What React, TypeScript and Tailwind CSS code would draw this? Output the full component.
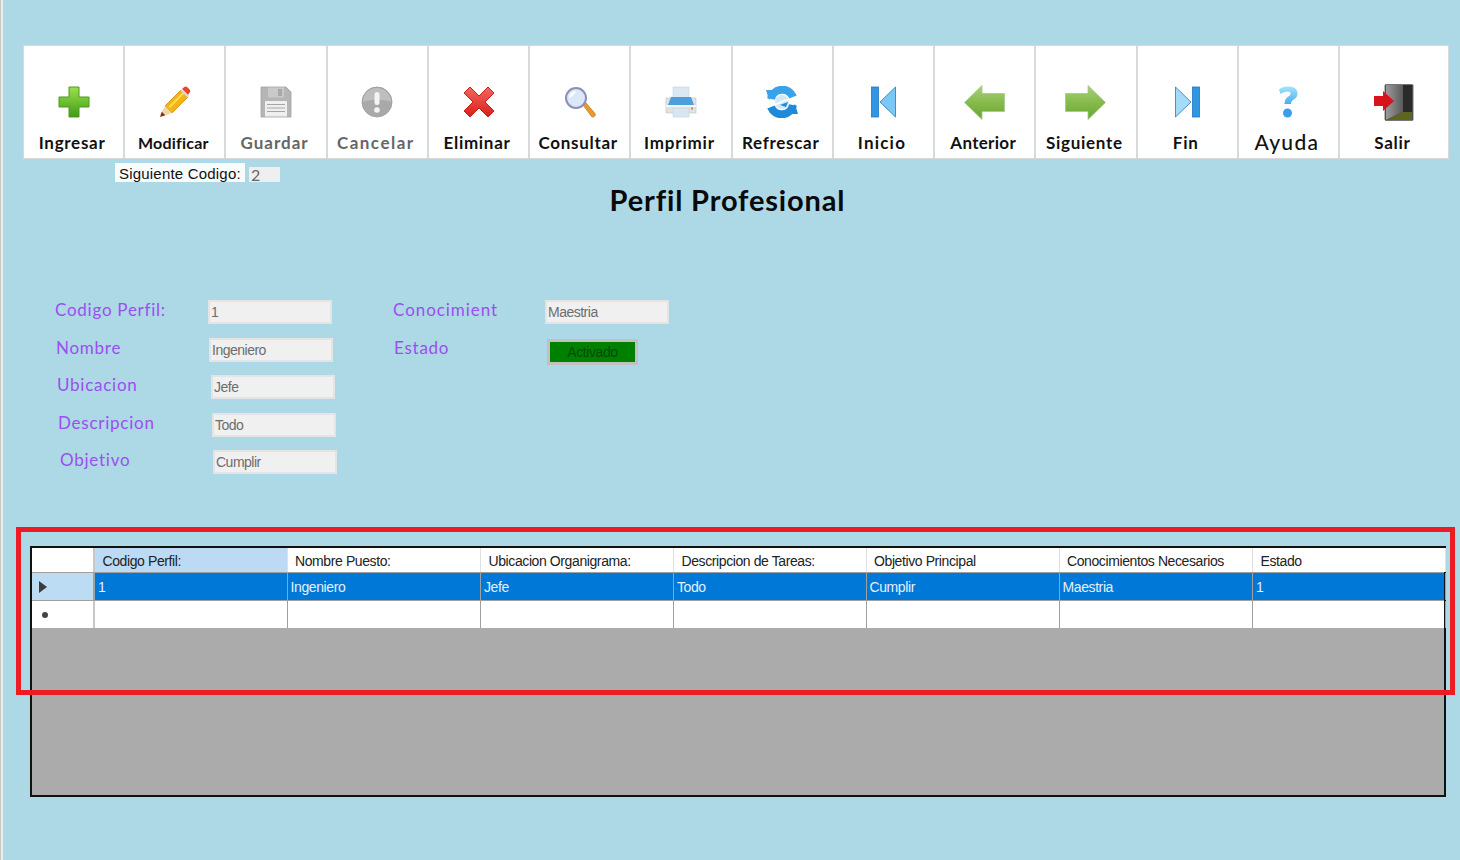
import type { ReactNode } from 'react';

const PlusIcon = () => (
  <svg width="32" height="32" viewBox="0 0 32 32">
    <defs>
      <linearGradient id="plusG" x1="0" y1="0" x2="0" y2="1">
        <stop offset="0" stopColor="#9be04a" />
        <stop offset="1" stopColor="#3f9c16" />
      </linearGradient>
    </defs>
    <path d="M11 1h10v10h10v10H21v10H11V21H1V11h10z" fill="url(#plusG)" stroke="#4c9a22" strokeWidth="1" />
  </svg>
);

const PencilIcon = () => (
  <svg width="32" height="32" viewBox="0 0 32 32">
    <path d="M6 20 22 4l7 7-16 16z" fill="#f4b512" stroke="#c98a10" strokeWidth="0.8" />
    <path d="M9.500 20.500 24 6l1.500 1.500L11 22z" fill="#fbdc4e" />
    <path d="m23 3 2-1.800c1-.9 2.400-.9 3.400 0l2.200 2.200c.9 1 .9 2.400 0 3.400L29 9z" fill="#e8452c" />
    <path d="m21.500 4.500 1.500-1.500 7 7-1.500 1.500z" fill="#d8d8d8" />
    <path d="m6 20 7 7-9 3.500-2.500-2.500z" fill="#f3d6a8" />
    <path d="m2.800 25.800 3.400 3.400L1 31z" fill="#7a3410" />
  </svg>
);

const FloppyIcon = () => (
  <svg width="32" height="32" viewBox="0 0 32 32">
    <path d="M1 1h25l5 5v25H1z" fill="#b5b5b5" stroke="#a2a2a2" strokeWidth="0.8" />
    <rect x="8" y="1.500" width="16" height="10" fill="#c9c9c9" />
    <rect x="18" y="3" width="4" height="7" fill="#a8a8a8" />
    <rect x="5" y="15" width="22" height="15.500" fill="#efefef" />
    <path d="M7 18.500h18M7 22h18M7 25.500h18" stroke="#a5a5a5" strokeWidth="1.200" />
  </svg>
);

const AlertIcon = () => (
  <svg width="32" height="32" viewBox="0 0 32 32">
    <circle cx="16" cy="16" r="15" fill="#a9a9a9" stroke="#999999" strokeWidth="0.8" />
    <path d="M2 16a14 14 0 0 1 28 0c-6-3-21-3-28 0z" fill="#bebebe" />
    <rect x="13.500" y="6" width="5" height="13" rx="2.500" fill="#f4f4f4" />
    <circle cx="16" cy="24" r="2.800" fill="#f4f4f4" />
  </svg>
);

const CrossIcon = () => (
  <svg width="32" height="32" viewBox="0 0 32 32">
    <defs>
      <linearGradient id="crossG" x1="0" y1="0" x2="0" y2="1">
        <stop offset="0" stopColor="#f6665c" />
        <stop offset="1" stopColor="#d81e1a" />
      </linearGradient>
    </defs>
    <path d="M7 1 16 10l9-9 6 6-9 9 9 9-6 6-9-9-9 9-6-6 9-9-9-9z" fill="url(#crossG)" stroke="#c9201b" strokeWidth="1" strokeLinejoin="round" />
  </svg>
);

const SearchIcon = () => (
  <svg width="32" height="32" viewBox="0 0 32 32">
    <path d="m19 19 3-2 9 10.500c.6 1 .4 2-.5 2.800s-2 1-2.900.2z" fill="#e89a2c" stroke="#b9741a" strokeWidth="0.7" />
    <circle cx="12" cy="12" r="10" fill="#dbe8f8" stroke="#8d8fb5" strokeWidth="2" />
    <path d="M5 12a7 7 0 0 1 7-7c-1 3-4 6-7 7z" fill="#ffffff" />
  </svg>
);

const PrinterIcon = () => (
  <svg width="32" height="32" viewBox="0 0 32 32">
    <rect x="8" y="1" width="16" height="12" fill="#dbe7f2" stroke="#c4d4e2" strokeWidth="0.6" />
    <path d="M1 12h30v15H1z" fill="#dfe3e6" stroke="#bcc4ca" strokeWidth="0.6" />
    <path d="M6 11h20l3 8H3z" fill="#4b9fdc" />
    <rect x="1" y="19" width="30" height="2" fill="#f3f5f6" />
    <rect x="8" y="22" width="16" height="9" fill="#d9e6f1" stroke="#c4d4e2" strokeWidth="0.6" />
    <rect x="26" y="21.500" width="2" height="2" fill="#e8833a" />
  </svg>
);

const RefreshIcon = () => (
  <svg width="32" height="32" viewBox="0 0 32 32">
    <circle cx="16" cy="16" r="7" fill="#cfe9fa" />
    <path d="M5 13A11.500 11.500 0 0 1 27 11" fill="none" stroke="#3aa2e8" strokeWidth="8" />
    <path d="M27 19A11.500 11.500 0 0 1 5 21" fill="none" stroke="#1f8ada" strokeWidth="8" />
    <path d="M0 4 10 4 3 14z" fill="#3aa2e8" />
    <path d="M32 28 22 28l7-10z" fill="#1f8ada" />
    <path d="M1 18.500 11 17l6-3 14-2.500v1.200L18 15.500 12 18.500 1 20z" fill="#ffffff" />
    <path d="M14 19l8-3-2 5z" fill="#1f8ada" />
  </svg>
);

const FirstIcon = () => (
  <svg width="25" height="32" viewBox="0 0 25 32">
    <rect x="0.500" y="1" width="7" height="30" fill="#2f97e2" stroke="#2277c4" strokeWidth="0.8" />
    <path d="M24.500 1v30L9 16z" fill="#7cc8f4" stroke="#2277c4" strokeWidth="0.8" />
  </svg>
);

const LastIcon = () => (
  <svg width="25" height="32" viewBox="0 0 25 32">
    <rect x="17.500" y="1" width="7" height="30" fill="#2f97e2" stroke="#2277c4" strokeWidth="0.8" />
    <path d="M0.500 1v30L16 16z" fill="#a4dcf8" stroke="#2277c4" strokeWidth="0.8" />
  </svg>
);

const LeftArrow = () => (
  <svg width="41" height="35" viewBox="0 0 41 35">
    <defs>
      <linearGradient id="arrL" x1="0" y1="0" x2="0" y2="1">
        <stop offset="0" stopColor="#a8d07a" />
        <stop offset="0.5" stopColor="#86bb4c" />
        <stop offset="1" stopColor="#6aa42e" />
      </linearGradient>
    </defs>
    <path d="M18 .5v8h22.500v18H18v8L.5 17.500z" fill="url(#arrL)" stroke="#a6c98c" strokeWidth="0.8" />
  </svg>
);

const RightArrow = () => (
  <svg width="41" height="35" viewBox="0 0 41 35">
    <defs>
      <linearGradient id="arrR" x1="0" y1="0" x2="0" y2="1">
        <stop offset="0" stopColor="#a8d07a" />
        <stop offset="0.5" stopColor="#86bb4c" />
        <stop offset="1" stopColor="#6aa42e" />
      </linearGradient>
    </defs>
    <path d="M23 .5v8H.5v18H23v8l17.500-17z" fill="url(#arrR)" stroke="#a6c98c" strokeWidth="0.8" />
  </svg>
);

const HelpIcon = () => (
  <svg width="20" height="32" viewBox="0 0 20 32">
    <defs>
      <linearGradient id="helpG" x1="0" y1="0" x2="0" y2="1">
        <stop offset="0" stopColor="#a4e4fc" />
        <stop offset="1" stopColor="#48aef0" />
      </linearGradient>
    </defs>
    <path d="M1 3.500C4 1 7 .5 10.500.5 16 .5 19.500 3 19.500 7.500c0 3.500-2 5-4.500 6.500-1.500 1-2 2-2 4H6.500c0-3.500 1-5.500 3-7 1.500-1 3-2 3-3.300 0-1.500-1-2.200-2.700-2.200-2.500 0-5 1-7.300 2.500z" fill="url(#helpG)" />
    <circle cx="9.500" cy="27" r="4.500" fill="#3a9eea" />
  </svg>
);

const ExitIcon = () => (
  <svg width="40" height="37" viewBox="0 0 40 37">
    <defs>
      <linearGradient id="doorG" x1="0" y1="0" x2="1" y2="0">
        <stop offset="0" stopColor="#9b9b9b" />
        <stop offset="1" stopColor="#5a5a5a" />
      </linearGradient>
    </defs>
    <rect x="11" y="0.500" width="28" height="36" rx="1" fill="#2b2b2b" stroke="#777777" strokeWidth="1" />
    <path d="M12 1h17v27L12 36z" fill="url(#doorG)" />
    <path d="M12 36l17-8h9v8z" fill="#5f6420" />
    <path d="M0 12h9V7l11 10-11 10v-5H0z" fill="#d8131b" />
  </svg>
);

type ToolItem = { label: string; icon: ReactNode; text: string };

const toolItems: ToolItem[] = [
  { label: 'Ingresar', icon: <PlusIcon />, text: 'text-[#111111] font-bold text-[17px] tracking-[0.7px]' },
  { label: 'Modificar', icon: <PencilIcon />, text: 'text-[#111111] font-bold text-[16px] tracking-[0.2px]' },
  { label: 'Guardar', icon: <FloppyIcon />, text: 'text-[#666666] font-bold text-[17px] tracking-[1px]' },
  { label: 'Cancelar', icon: <AlertIcon />, text: 'text-[#666666] font-bold text-[17px] tracking-[1.500px]' },
  { label: 'Eliminar', icon: <CrossIcon />, text: 'text-[#111111] font-bold text-[17px] tracking-[0.7px]' },
  { label: 'Consultar', icon: <SearchIcon />, text: 'text-[#111111] font-bold text-[17px] tracking-[0.7px]' },
  { label: 'Imprimir', icon: <PrinterIcon />, text: 'text-[#111111] font-bold text-[17px] tracking-[0.8px]' },
  { label: 'Refrescar', icon: <RefreshIcon />, text: 'text-[#111111] font-bold text-[17px] tracking-[0.7px]' },
  { label: 'Inicio', icon: <FirstIcon />, text: 'text-[#111111] font-bold text-[17px] tracking-[1.200px]' },
  { label: 'Anterior', icon: <LeftArrow />, text: 'text-[#111111] font-bold text-[17px] tracking-[0.3px]' },
  { label: 'Siguiente', icon: <RightArrow />, text: 'text-[#111111] font-bold text-[17px] tracking-[0.7px]' },
  { label: 'Fin', icon: <LastIcon />, text: 'text-[#111111] font-bold text-[17px] tracking-[0.7px]' },
  { label: 'Ayuda', icon: <HelpIcon />, text: 'text-[#111111] font-medium text-[21px] tracking-[1.300px] -translate-y-px' },
  { label: 'Salir', icon: <ExitIcon />, text: 'text-[#111111] font-bold text-[17px] tracking-[0.7px]' },
];

const leftFields = [
  { label: 'Codigo Perfil:', value: '1', labelClass: 'ml-[52px]', inputClass: 'ml-[43px]' },
  { label: 'Nombre', value: 'Ingeniero', labelClass: 'ml-[53px]', inputClass: 'ml-[43px]' },
  { label: 'Ubicacion', value: 'Jefe', labelClass: 'ml-[54px]', inputClass: 'ml-[44px]' },
  { label: 'Descripcion', value: 'Todo', labelClass: 'ml-[55px]', inputClass: 'ml-[44px]' },
  { label: 'Objetivo', value: 'Cumplir', labelClass: 'ml-[57px]', inputClass: 'ml-[43px]' },
];

const columns = [
  'Codigo Perfil:',
  'Nombre Puesto:',
  'Ubicacion Organigrama:',
  'Descripcion de Tareas:',
  'Objetivo Principal',
  'Conocimientos Necesarios',
  'Estado',
];
const rowValues = ['1', 'Ingeniero', 'Jefe', 'Todo', 'Cumplir', 'Maestria', '1'];

const gridCols = 'grid grid-cols-[63px_192.500px_193.500px_193px_192.500px_193px_193.500px_192.500px]';

function FieldBox({ value, className }: { value: string; className?: string }) {
  return (
    <div className={`w-[124px] h-[24px] shrink-0 bg-[#f0f0f0] border-2 border-[#e4e4e4] pl-[1px] text-[14px] leading-[20px] tracking-[-0.5px] text-[#6d6d6d] ${className ?? ''}`}>
      {value}
    </div>
  );
}

export default function App() {
  return (
    <div className="flex w-[1460px] h-[860px] overflow-hidden bg-[#add8e6] font-['Liberation_Sans',sans-serif]">
      <div className="w-[3px] shrink-0 bg-[#ececec] border-l border-[#c8c8c8]" />

      <div className="relative flex-1 min-w-0 flex flex-col">
        {/* Toolbar */}
        <div className="mt-[45px] ml-[20px] w-[1426px] h-[114px] shrink-0 bg-[#d9d9d9] p-[1px] gap-[2px] grid grid-cols-[repeat(13,1fr)_108px] font-['Lato',sans-serif]">
          {toolItems.map((item) => (
            <div key={item.label} className="bg-white flex flex-col items-center min-w-0">
              <div className="h-[38px] mt-[37px] flex items-center justify-center shrink-0">{item.icon}</div>
              <div className={`mt-[10px] pr-[3px] leading-[24px] whitespace-nowrap ${item.text}`}>{item.label}</div>
            </div>
          ))}
        </div>

        {/* Siguiente codigo */}
        <div className="mt-[4px] ml-[112px] flex items-end h-[19px] shrink-0">
          <div className="w-[130px] h-[19px] bg-[#f8fbfc] pl-[4px] text-[15px] leading-[22px] tracking-[0.2px] text-[#111111]">Siguiente Codigo:</div>
          <div className="ml-[4px] w-[31px] h-[15px] bg-[#efefef] pl-[2px] font-['Lato',sans-serif] text-[16px] leading-[15px] text-[#666666]">2</div>
        </div>

        <h1 className="ml-[-8px] text-center text-[29px] leading-[36px] tracking-[0.85px] font-bold text-[#0a0a0a] font-['Lato',sans-serif]">Perfil Profesional</h1>

        {/* Form */}
        <div className="mt-[82px] flex h-[174px] shrink-0 font-['Lato',sans-serif]">
          <div className="w-[337px] shrink-0 flex flex-col gap-[13.500px]">
            {leftFields.map((field) => (
              <div key={field.label} className="flex items-start h-[24px]">
                <div className={`w-[110px] shrink-0 text-[17px] leading-[20px] tracking-[0.75px] text-[#9b4ff0] whitespace-nowrap ${field.labelClass}`}>{field.label}</div>
                <FieldBox value={field.value} className={`font-['Liberation_Sans',sans-serif] ${field.inputClass}`} />
              </div>
            ))}
          </div>
          <div className="ml-[53px] flex flex-col gap-[13.500px]">
            <div className="flex items-start h-[24px]">
              <div className="w-[152px] shrink-0 text-[17px] leading-[20px] tracking-[0.95px] text-[#9b4ff0]">Conocimient</div>
              <FieldBox value="Maestria" className="font-['Liberation_Sans',sans-serif]" />
            </div>
            <div className="flex items-start h-[24px]">
              <div className="ml-[1px] w-[153px] shrink-0 text-[17px] leading-[20px] tracking-[0.75px] text-[#9b4ff0]">Estado</div>
              <div className="mt-[1px] w-[91px] h-[26px] shrink-0 border-[3px] border-[#c0c0c0] bg-[#008000] text-center font-['Liberation_Sans',sans-serif] text-[14px] leading-[21px] tracking-[-0.4px] text-[#004d00]">Activado</div>
            </div>
          </div>
        </div>

        {/* Data grid */}
        <div className="mt-[72px] ml-[27px] w-[1416px] h-[251px] shrink-0 border-2 border-[#111111] bg-[#ababab] text-[14px] tracking-[-0.4px]">
          <div className={`${gridCols} h-[25px] bg-white border-b border-[#a0a0a0]`}>
            <div className="border-r-2 border-[#c8c8c8]" />
            {columns.map((col, i) => (
              <div key={col} className={`pl-[7.500px] pt-[3px] leading-[21px] text-[#222222] whitespace-nowrap border-r border-[#e0e0e0] ${i === 0 ? 'bg-[#bcdaf3]' : 'bg-white'}`}>{col}</div>
            ))}
          </div>
          <div className={`${gridCols} h-[28px] bg-[#0078d7] border-b border-[#a0a0a0]`}>
            <div className="bg-[#bcdcf4] border-r-2 border-[#a0a0a0] flex items-center pl-[7px]">
              <svg width="8" height="12" viewBox="0 0 8 12"><path d="M0 0l8 6-8 6z" fill="#3c3c3c" /></svg>
            </div>
            {rowValues.map((val, i) => (
              <div key={i} className="pl-[3px] pt-[2px] leading-[25px] text-[#e4f1fb] border-r border-[#a0a0a0]">{val}</div>
            ))}
          </div>
          <div className={`${gridCols} h-[27px] bg-white`}>
            <div className="border-r-2 border-[#c8c8c8] flex items-center pl-[10px]">
              <div className="w-[6px] h-[6px] rounded-full bg-[#444444]" />
            </div>
            {rowValues.map((_, i) => (
              <div key={i} className="border-r border-[#a0a0a0]" />
            ))}
          </div>
        </div>

        {/* Annotation frame */}
        <div className="absolute left-[13px] top-[527px] w-[1439px] h-[168px] border-[5px] border-[#ed1c24] pointer-events-none" />
      </div>
    </div>
  );
}
